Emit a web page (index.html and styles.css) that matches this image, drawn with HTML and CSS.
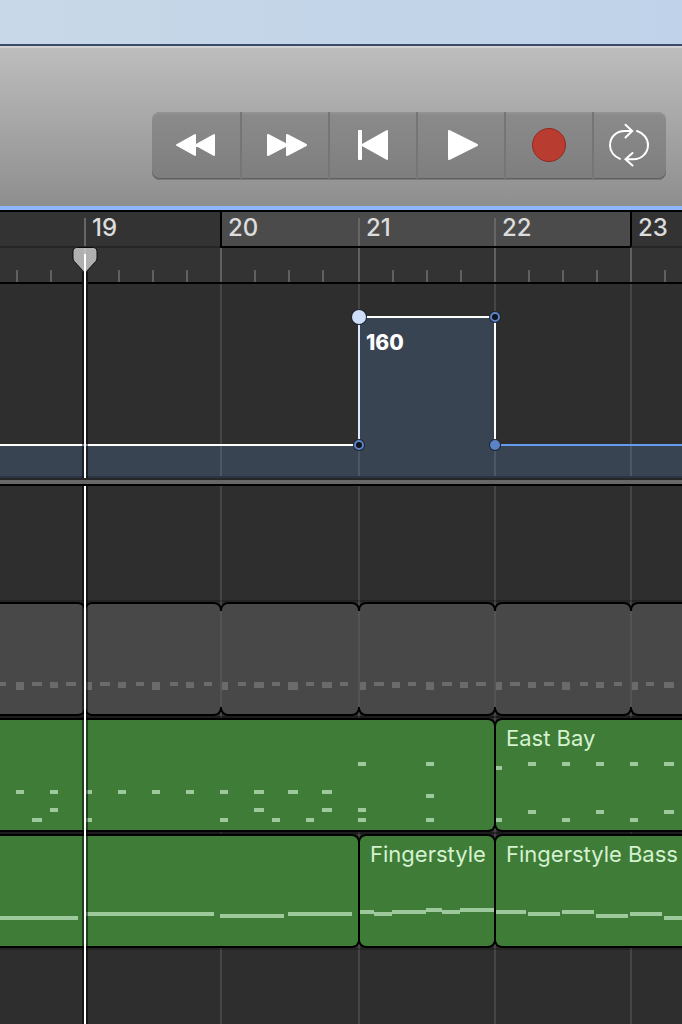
FILE: index.html
```
<!DOCTYPE html>
<html lang="en">
<head>
  <meta charset="UTF-8">
  <title>Tempo Track</title>
  <meta name="viewport" content="width=device-width, initial-scale=1">
  <link rel="stylesheet" href="styles.css">
</head>
<body>
  <div class="desktop"></div>
  <header class="toolbar">
    <div class="transport">
      <button type="button" aria-label="Rewind">
        <svg width="44" height="26" viewBox="0 0 44 26"><path class="solid" d="M3 13L21 3V23ZM22 13L40 3V23Z"/></svg>
      </button>
      <button type="button" aria-label="Forward">
        <svg width="44" height="26" viewBox="0 0 44 26"><path class="solid" d="M43 13L24 3V23ZM24 13L5 3V23Z"/></svg>
      </button>
      <button type="button" aria-label="Go to beginning">
        <svg width="32" height="32" viewBox="0 0 32 32"><path class="solid" d="M2 2H4V30H2ZM5 16L30 2V30Z"/></svg>
      </button>
      <button type="button" aria-label="Play">
        <svg width="34" height="32" viewBox="0 0 34 32"><path class="solid" d="M5 2V30L33 16Z"/></svg>
      </button>
      <button type="button" aria-label="Record">
        <svg width="36" height="36" viewBox="0 0 36 36"><circle class="record" cx="18" cy="18" r="16.5"/></svg>
      </button>
      <button type="button" aria-label="Cycle" class="cycle">
        <svg width="44" height="44" viewBox="0 0 44 44">
          <path class="stroke" d="M12 35.8C6.500 33.500 2 28.500 2 22.500C2 14 8.500 8 16.500 8H23M29 8C35.500 10 40 15.500 40 22C40 30 33.500 36.300 25.500 36.300H18M17.500 1.800L24.200 8L17.500 14.500M24.500 30L17.500 36.300L24.500 42.500"/>
        </svg>
      </button>
    </div>
  </header>

  <section class="ruler">
    <ol class="bars">
      <li></li>
      <li>19</li>
      <li class="in-cycle cycle-start">20</li>
      <li class="in-cycle">21</li>
      <li class="in-cycle">22</li>
      <li class="cycle-end">23</li>
    </ol>
    <div class="beats">
      <span></span><span></span><span></span><span></span><span></span><span></span>
    </div>
    <svg class="marker" width="28" height="38" viewBox="0 0 28 38">
      <path class="marker-shadow" d="M11 26H17V38H11Z"/>
      <path class="marker-head" d="M5.500 1.500H22.500Q26 1.500 26 5V12Q26 14 24.700 15.500L15.500 25.500Q14 27 12.500 25.500L3.300 15.500Q2 14 2 12V5Q2 1.500 5.500 1.500Z"/>
      <path class="marker-tick" d="M13 2H15V8H13Z"/>
      <path class="marker-line" d="M13 8H15V38H13Z"/>
    </svg>
  </section>

  <section class="tempo">
    <svg class="curve" width="100%" height="194">
      <rect class="area" x="0" y="161" width="100%" height="33"/>
      <rect class="area" x="359" y="33" width="136" height="128"/>
      <rect class="area-edge" x="0" y="192" width="100%" height="2"/>
      <path class="bar-line" d="M221 162V192M359 162V192M495 162V192M631 162V192"/>
      <path class="selected" d="M0 161H359M359 33H495V161"/>
      <path class="active" d="M359 33V161"/>
      <line class="idle" x1="495" y1="161" x2="100%" y2="161"/>
      <circle class="gap" cx="359" cy="33" r="8"/>
      <circle class="point-main" cx="359" cy="33" r="7"/>
      <circle class="gap" cx="495" cy="33" r="6"/>
      <circle class="point" cx="495" cy="33" r="4"/>
      <circle class="gap" cx="359" cy="161" r="6"/>
      <circle class="point" cx="359" cy="161" r="4"/>
      <circle class="gap" cx="495" cy="161" r="6"/>
      <circle class="point-full" cx="495" cy="161" r="5"/>
      <text x="366" y="66">160</text>
    </svg>
    <div class="playhead"></div>
  </section>

  <div class="divider"></div>

  <main class="tracks">
    <div class="lane muted">
      <div class="region first">
        <svg class="notes"><path d="M0 80h6M32 80h10M66 80h10"/><path class="mid" d="M50 81h8"/><path class="tall" d="M16 82h8"/></svg>
      </div>
      <div class="region">
        <svg class="notes"><path d="M14 80h10M50 80h8M84 80h8M118 80h8"/><path class="mid" d="M32 81h8M100 81h8"/><path class="tall" d="M0 82h6M66 82h8"/></svg>
      </div>
      <div class="region">
        <svg class="notes"><path d="M16 80h8M50 80h8M84 80h8M118 80h8"/><path class="mid" d="M32 81h10M100 81h10"/><path class="tall" d="M0 82h6M66 82h10"/></svg>
      </div>
      <div class="region">
        <svg class="notes"><path d="M14 80h10M48 80h8M82 80h10M116 80h10"/><path class="mid" d="M32 81h8M100 81h8"/><path class="tall" d="M0 82h6M66 82h8"/></svg>
      </div>
      <div class="region">
        <svg class="notes"><path d="M14 80h10M48 80h10M84 80h8M118 80h8"/><path class="mid" d="M32 81h8M100 81h8"/><path class="tall" d="M0 82h6M66 82h8"/></svg>
      </div>
      <div class="region last">
        <svg class="notes"><path d="M14 80h8"/><path class="mid" d="M32 81h10"/><path class="tall" d="M0 82h6"/></svg>
      </div>
    </div>

    <div class="lane">
      <div class="region first span-4">
        <svg class="notes">
          <path d="M358 44h8M426 44h8"/>
          <path d="M16 72h8M50 72h8M84 72h8M118 72h8M152 72h8M186 72h8M220 72h8M254 72h10M288 72h10M322 72h10"/>
          <path d="M426 76h8"/>
          <path d="M50 90h8M254 90h10M322 90h10M358 90h8"/>
          <path d="M32 100h10M84 100h8M220 100h8M272 100h8M306 100h8M358 100h8M426 100h8"/>
        </svg>
      </div>
      <div class="region last span-2">
        <svg class="notes">
          <path d="M0 48h6"/>
          <path d="M32 44h8M66 44h8M100 44h8M134 44h8M168 44h10"/>
          <path d="M32 92h8M100 92h8M168 92h10"/>
          <path d="M0 100h6M66 100h8M134 100h8"/>
        </svg>
        <span class="name">East Bay</span>
      </div>
    </div>

    <div class="lane">
      <div class="region first span-3">
        <svg class="notes"><path d="M0 82h78M84 78h130M220 80h64M288 78h64"/></svg>
      </div>
      <div class="region">
        <svg class="notes"><path d="M0 76h14M14 78h18M32 76h34M66 74h16M82 76h18M100 74h34"/></svg>
        <span class="name">Fingerstyle</span>
      </div>
      <div class="region last span-2">
        <svg class="notes"><path d="M0 76h30M32 78h32M66 76h32M100 80h32M134 78h32M168 82h32"/></svg>
        <span class="name">Fingerstyle Bass</span>
      </div>
    </div>
    <div class="playhead"></div>
  </main>
</body>
</html>
```
FILE: styles.css
```
:root {
  --bars: 84px 136px 138px 136px 136px 1fr;
  --line: #464646;
  --bar-lines:
    linear-gradient(var(--line), var(--line)) 220px 0 / 2px 100% no-repeat,
    linear-gradient(var(--line), var(--line)) 358px 0 / 2px 100% no-repeat,
    linear-gradient(var(--line), var(--line)) 494px 0 / 2px 100% no-repeat,
    linear-gradient(var(--line), var(--line)) 630px 0 / 2px 100% no-repeat;
}
* {
  box-sizing: border-box;
}
body {
  margin: 0;
  min-height: 100vh;
  display: flex;
  flex-direction: column;
  background: #2e2e2e;
  font-family: Inter, "Liberation Sans", sans-serif;
  overflow-x: hidden;
}
.desktop {
  height: 46px;
  background: linear-gradient(90deg, #c8d8e8, #c3d5e8 50%, #c0d2e9);
  border-bottom: 2px solid #3a4b69;
}

/* transport bar */
.toolbar {
  display: flex;
  justify-content: flex-end;
  padding: 64px 16px 26px;
  border-top: 2px solid #d2d2d2;
  border-bottom: 4px solid #8db7f6;
  background: linear-gradient(#bdbdbd, #8e8e8e);
}
.transport {
  display: flex;
  height: 68px;
  border-radius: 8px;
  overflow: hidden;
  background: linear-gradient(#8b8b8b, #7e7e7e);
  box-shadow: inset 0 2px 0 #929292, inset 0 -1px 0 #7a7a7a, inset 0 -2px 0 #5e5e5e;
}
.transport button {
  display: flex;
  align-items: center;
  justify-content: center;
  width: 88px;
  padding: 0 0 2px;
  border: 0;
  border-right: 2px solid #757575;
  background: none;
}
.transport button:first-child {
  width: 90px;
}
.transport .cycle {
  width: 72px;
  border-right: 0;
}
.solid {
  fill: #fff;
  stroke: #fff;
  stroke-width: 2;
  stroke-linejoin: round;
}
.stroke {
  fill: none;
  stroke: #fff;
  stroke-width: 2;
  stroke-linecap: round;
}
.record {
  fill: #b93c30;
  stroke: #8f2b23;
}

/* ruler */
.ruler {
  position: relative;
  border-top: 2px solid #000;
  border-bottom: 2px solid #000;
  background: #333;
}
.bars {
  display: grid;
  grid-template-columns: var(--bars);
  margin: 0;
  padding: 0;
  list-style: none;
}
.bars li {
  height: 36px;
  padding-left: 8px;
  border-bottom: 2px solid #262626;
  color: #dcdcdc;
  font-size: 24px;
  font-weight: 500;
  line-height: 32px;
  background: linear-gradient(#666, #666) 0 6px / 2px 28px no-repeat;
}
.bars li:first-child {
  background: none;
}
.bars .in-cycle {
  background-color: #4b4b4b;
  border-bottom-color: #000;
}
.bars .cycle-start,
.bars .cycle-end {
  padding-left: 6px;
  border-left: 2px solid #000;
  background-image: none;
}
.beats {
  display: grid;
  grid-template-columns: var(--bars);
  height: 34px;
}
.beats span {
  background:
    linear-gradient(#606060, #606060) 0 0 / 2px 100% no-repeat,
    repeating-linear-gradient(90deg, #606060 0 2px, transparent 2px 34px) 0 100% / 136px 12px no-repeat;
}
.beats span:first-child {
  background: repeating-linear-gradient(90deg, #606060 0 2px, transparent 2px 34px) 100% 100% / 136px 12px no-repeat;
}
.marker {
  position: absolute;
  left: 71px;
  bottom: -2px;
  z-index: 1;
}
.marker-head {
  fill: #b0b0b0;
  stroke: #0c0c0c;
}
.marker-shadow {
  fill: #161616;
}
.marker-tick {
  fill: #bcbcbc;
}
.marker-line {
  fill: #fff;
}

/* tempo curve */
.tempo {
  position: relative;
  background: var(--bar-lines);
}
.curve {
  display: block;
}
.area {
  fill: #394452;
}
.area-edge {
  fill: #2a3442;
}
.bar-line {
  stroke: #4d5763;
  stroke-width: 2;
}
.selected {
  fill: none;
  stroke: #fff;
  stroke-width: 2;
}
.active {
  stroke: #dce8ff;
  stroke-width: 2;
}
.idle {
  stroke: #659cf0;
  stroke-width: 2;
}
.gap {
  fill: #1d2430;
}
.point {
  fill: #10141c;
  stroke: #5b82c5;
  stroke-width: 2;
}
.point-main {
  fill: #cfdef8;
}
.point-full {
  fill: #5b82c5;
}
.curve text {
  fill: #fff;
  font-size: 21px;
  font-weight: 800;
}
.playhead {
  position: absolute;
  top: 0;
  bottom: 0;
  left: 84px;
  width: 2px;
  background: #fff;
  box-shadow: 0 0 0 2px rgba(0, 0, 0, 0.5);
  clip-path: inset(0 -2px);
}
.divider {
  height: 8px;
  border-top: 2px solid #262626;
  border-bottom: 2px solid #000;
  background: #676767;
}

/* tracks */
.tracks {
  position: relative;
  flex: 1;
  display: flex;
  flex-direction: column;
  gap: 2px;
  padding: 116px 0 76px;
  background: var(--bar-lines);
}
.lane {
  display: grid;
  grid-template-columns: var(--bars);
  box-shadow: 0 -2px 0 rgba(0, 0, 0, 0.2), 0 2px 0 rgba(0, 0, 0, 0.2);
}
.region {
  position: relative;
  display: grid;
  height: 114px;
  margin-right: -2px;
  border: 2px solid #000;
  border-radius: 8px;
  background: #3f7c37;
  min-width: 0;
}
.region.first {
  border-left: 0;
  border-top-left-radius: 0;
  border-bottom-left-radius: 0;
}
.region.last {
  margin-right: 0;
  border-right: 0;
  border-top-right-radius: 0;
  border-bottom-right-radius: 0;
  overflow: hidden;
}
.span-2 {
  grid-column: span 2;
}
.span-3 {
  grid-column: span 3;
}
.span-4 {
  grid-column: span 4;
}
.notes,
.name {
  grid-area: 1 / 1;
}
.notes {
  width: 100%;
  height: 110px;
  fill: none;
  stroke: #9dc99d;
  stroke-width: 4;
}
.notes .mid {
  stroke-width: 6;
}
.notes .tall {
  stroke-width: 8;
}
.name {
  padding-left: 10px;
  color: #d5f2d0;
  font-size: 22px;
  line-height: 36px;
  white-space: nowrap;
}
.muted .region {
  background: #484848;
}
.muted .notes {
  stroke: #6b6b6b;
}
/* muted loops show only a faint seam between the corner notches */
.muted .region:not(.first) {
  overflow: visible;
}
.muted .region:not(.first)::before {
  content: "";
  position: absolute;
  top: 7px;
  bottom: 7px;
  left: -2px;
  width: 2px;
  background: #545454;
}
```
